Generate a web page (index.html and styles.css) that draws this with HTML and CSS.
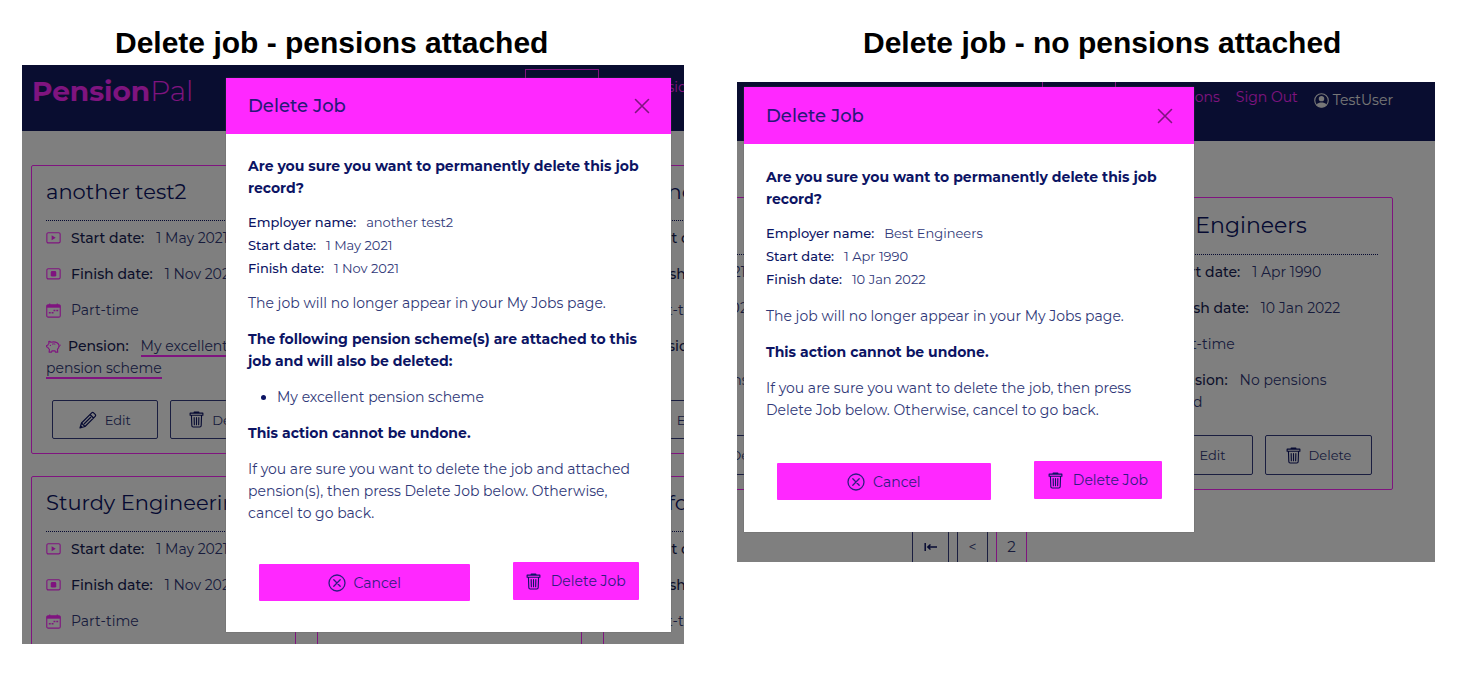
FILE: index.html
```html
<!DOCTYPE html>
<html lang="en">
<head>
<meta charset="utf-8">
<title>PensionPal - Delete job</title>
<link rel="stylesheet" href="styles.css">
</head>
<body>
<svg class="sprite" aria-hidden="true">
  <symbol id="i-play" viewBox="0 0 16 13"><rect x=".8" y=".8" width="14.4" height="11" rx="1.5" fill="none" stroke="currentColor" stroke-width="1.2"/><path d="M6 3.6v5.4l4.4-2.7z" fill="currentColor"/></symbol>
  <symbol id="i-stop" viewBox="0 0 16 13"><rect x=".8" y=".8" width="14.4" height="11" rx="1.5" fill="none" stroke="currentColor" stroke-width="1.2"/><rect x="5" y="3.3" width="6" height="6" rx="1.5" fill="currentColor"/></symbol>
  <symbol id="i-cal" viewBox="0 0 16 16"><path d="M4 .5V2M12 .5V2" stroke="currentColor" stroke-width="1.2"/><rect x=".8" y="1.8" width="14.4" height="13.2" rx="1.5" fill="none" stroke="currentColor" stroke-width="1.2"/><path d="M.8 2h14.4v3H.8z" fill="currentColor"/><path d="M8 8h2M11 8h2M3 10.5h2M6 10.5h2" stroke="currentColor" stroke-width="1.6"/></symbol>
  <symbol id="i-pig" viewBox="0 0 16 16"><path d="M13.800 6.500C13 4.200 10.800 3 8 3c-1 0-2 .2-2.800.5C4.600 2.800 3.700 2.500 2.900 2.600l.3 2c-.7.600-1.100 1.200-1.400 2-.9 0-1.300.3-1.300 1s.5 1.300 1.500 1.300c.3.9.9 1.600 1.700 2.200l-.4 2.900H6l.4-1.500c1 .2 2.200.2 3.200 0L10 14h2.500l-.3-3c1.300-1 1.800-2.300 1.600-4.500z" fill="none" stroke="currentColor" stroke-width="1.200" stroke-linejoin="round"/><path d="M13.800 8c1.200-.2 1.600-1 1.300-2M10 5.500c-1.200-.4-2.400-.4-3.600 0" fill="none" stroke="currentColor"/><circle cx="4.700" cy="6.800" r=".7" fill="currentColor"/></symbol>
  <symbol id="i-pencil" viewBox="0 0 18 18"><path d="M1 17l1.500-5L12.700 1.800c.6-.6 1.300-.6 1.900 0l1.600 1.600c.6.600.6 1.300 0 1.900L6 15.500zM2.500 12L6 15.500M11 3.500L14.500 7M12 6L5 13M1 17l2-.8-1.200-1.200z" fill="none" stroke="currentColor" stroke-width="1.2" stroke-linejoin="round"/></symbol>
  <symbol id="i-trash" viewBox="0 0 16 18"><path d="M5.500 2.200V1h5v1.200M1.200 2.200h13.600v2.200H1.200zM2.600 4.500l.4 11c0 1 .6 1.500 1.500 1.500h7c.9 0 1.500-.5 1.500-1.500l.4-11M5.500 7l.2 7.500M8 7v7.500M10.500 7l-.2 7.500" fill="none" stroke="currentColor" stroke-width="1.200" stroke-linejoin="round" stroke-linecap="round"/></symbol>
  <symbol id="i-cancel" viewBox="0 0 18 18"><circle cx="9" cy="9" r="8" fill="none" stroke="currentColor" stroke-width="1.300"/><path d="M5.800 5.800l6.400 6.400M12.200 5.800l-6.400 6.400" stroke="currentColor" stroke-width="1.300" stroke-linecap="round"/></symbol>
  <symbol id="i-close" viewBox="0 0 16 16"><path d="M1.500 1.500l13 13M14.500 1.500l-13 13" stroke="currentColor" stroke-width="1.600" stroke-linecap="round"/></symbol>
  <symbol id="i-user" viewBox="0 0 16 16"><circle cx="8" cy="8" r="7.200" fill="none" stroke="currentColor" stroke-width="1.200"/><circle cx="8" cy="6" r="2.900" fill="currentColor"/><path d="M2.600 12.500C4 10.300 6 10 8 10s4 .3 5.400 2.500C12 14.500 10 15.200 8 15.200s-4-.7-5.400-2.700z" fill="currentColor"/></symbol>
  <symbol id="i-first" viewBox="0 0 14 10"><path d="M1.200 1v8M3.500 5H13M6.500 2.500L3.800 5l2.700 2.500" fill="none" stroke="currentColor" stroke-width="1.500"/></symbol>
</svg>

<main class="board">
  <section class="panel">
    <h1 class="panel-title panel-title-a">Delete job - pensions attached</h1>
    <div class="screen screen-a">
      <div class="app">
        <header class="topbar">
          <a class="logo" href="#"><b>Pension</b>Pal</a>
          <nav class="nav"><a class="current" href="#" aria-label="My Jobs"></a><a href="#">My Pensions</a></nav>
        </header>
        <div class="cards">
          <article class="card">
            <h2>another test2</h2>
            <p><svg class="ico wide"><use href="#i-play"/></svg><b>Start date:</b>1 May 2021</p>
            <p><svg class="ico wide"><use href="#i-stop"/></svg><b>Finish date:</b>1 Nov 2021</p>
            <p><svg class="ico"><use href="#i-cal"/></svg>Part-time</p>
            <p><svg class="ico near"><use href="#i-pig"/></svg><b>Pension:</b><a href="#">My excellent pension scheme</a></p>
            <div class="actions"><button><svg class="pencil"><use href="#i-pencil"/></svg>Edit</button><button><svg class="trash"><use href="#i-trash"/></svg>Delete</button></div>
          </article>
          <article class="card"></article>
          <article class="card">
            <h2>Technology</h2>
            <p><svg class="ico wide"><use href="#i-play"/></svg><b>Start date:</b></p>
            <p><svg class="ico wide"><use href="#i-stop"/></svg><b>Finish date:</b></p>
            <p><svg class="ico"><use href="#i-cal"/></svg>Part-time</p>
            <p><svg class="ico near"><use href="#i-pig"/></svg><b>Pension:</b><br>&nbsp;</p>
            <div class="actions"><button><svg class="pencil"><use href="#i-pencil"/></svg>Edit</button><button aria-label="Delete"></button></div>
          </article>
          <article class="card">
            <h2>Sturdy Engineering</h2>
            <p><svg class="ico wide"><use href="#i-play"/></svg><b>Start date:</b>1 May 2021</p>
            <p><svg class="ico wide"><use href="#i-stop"/></svg><b>Finish date:</b>1 Nov 2021</p>
            <p><svg class="ico"><use href="#i-cal"/></svg>Part-time</p>
          </article>
          <article class="card"></article>
          <article class="card">
            <h2>Comfort</h2>
            <p><svg class="ico wide"><use href="#i-play"/></svg><b>Start date:</b></p>
            <p><svg class="ico wide"><use href="#i-stop"/></svg><b>Finish date:</b></p>
            <p><svg class="ico"><use href="#i-cal"/></svg>Part-time</p>
          </article>
        </div>
      </div>
      <div class="overlay">
        <div class="modal" role="dialog" aria-labelledby="t1">
          <header class="modal-head"><h2 id="t1">Delete Job</h2><button class="close" aria-label="Close"><svg><use href="#i-close"/></svg></button></header>
          <div class="modal-body">
            <p class="ask">Are you sure you want to permanently delete this job record?</p>
            <dl>
              <div><dt>Employer name:</dt><dd>another test2</dd></div>
              <div><dt>Start date:</dt><dd>1 May 2021</dd></div>
              <div><dt>Finish date:</dt><dd>1 Nov 2021</dd></div>
            </dl>
            <p>The job will no longer appear in your My Jobs page.</p>
            <p class="strong">The following pension scheme(s) are attached to this job and will also be deleted:</p>
            <ul><li>My excellent pension scheme</li></ul>
            <p class="strong">This action cannot be undone.</p>
            <p>If you are sure you want to delete the job and attached pension(s), then press Delete Job below. Otherwise, cancel to go back.</p>
          </div>
          <footer class="modal-foot"><button class="cancel"><svg><use href="#i-cancel"/></svg>Cancel</button><button class="delete"><svg class="trash"><use href="#i-trash"/></svg>Delete Job</button></footer>
        </div>
      </div>
    </div>
  </section>

  <section class="panel">
    <h1 class="panel-title panel-title-b">Delete job - no pensions attached</h1>
    <div class="screen screen-b">
      <div class="app">
        <header class="topbar">
          <nav class="nav"><a class="current" href="#" aria-label="My Jobs"></a><a href="#">My Pensions</a><a href="#">Sign Out</a><span class="user"><svg><use href="#i-user"/></svg>TestUser</span></nav>
        </header>
        <div class="cards">
          <article class="card">
            <h2>Acme</h2>
            <p><svg class="ico wide"><use href="#i-play"/></svg><b>Start date:</b>1 May 2021</p>
            <p><svg class="ico wide"><use href="#i-stop"/></svg><b>Finish date:</b>1 Nov 2021</p>
            <p><svg class="ico"><use href="#i-cal"/></svg>Part-time</p>
            <p><svg class="ico near"><use href="#i-pig"/></svg><b>Pension:</b>No pensions attached</p>
            <div class="actions"><button><svg class="pencil"><use href="#i-pencil"/></svg>Edit</button><button><svg class="trash"><use href="#i-trash"/></svg>Delete</button></div>
          </article>
          <article class="card"></article>
          <article class="card">
            <h2>Best Engineers</h2>
            <p><svg class="ico wide"><use href="#i-play"/></svg><b>Start date:</b>1 Apr 1990</p>
            <p><svg class="ico wide"><use href="#i-stop"/></svg><b>Finish date:</b>10 Jan 2022</p>
            <p><svg class="ico"><use href="#i-cal"/></svg>Part-time</p>
            <p><svg class="ico near"><use href="#i-pig"/></svg><b>Pension:</b>No pensions attached</p>
            <div class="actions"><button><svg class="pencil"><use href="#i-pencil"/></svg>Edit</button><button><svg class="trash"><use href="#i-trash"/></svg>Delete</button></div>
          </article>
        </div>
        <div class="pager"><button class="first" aria-label="First page"><svg><use href="#i-first"/></svg></button><button aria-label="Previous page">&lt;</button><button class="here">2</button></div>
      </div>
      <div class="overlay">
        <div class="modal" role="dialog" aria-labelledby="t2">
          <header class="modal-head"><h2 id="t2">Delete Job</h2><button class="close" aria-label="Close"><svg><use href="#i-close"/></svg></button></header>
          <div class="modal-body">
            <p class="ask">Are you sure you want to permanently delete this job record?</p>
            <dl>
              <div><dt>Employer name:</dt><dd>Best Engineers</dd></div>
              <div><dt>Start date:</dt><dd>1 Apr 1990</dd></div>
              <div><dt>Finish date:</dt><dd>10 Jan 2022</dd></div>
            </dl>
            <p>The job will no longer appear in your My Jobs page.</p>
            <p class="strong">This action cannot be undone.</p>
            <p>If you are sure you want to delete the job, then press Delete Job below. Otherwise, cancel to go back.</p>
          </div>
          <footer class="modal-foot"><button class="cancel"><svg><use href="#i-cancel"/></svg>Cancel</button><button class="delete"><svg class="trash"><use href="#i-trash"/></svg>Delete Job</button></footer>
        </div>
      </div>
    </div>
  </section>
</main>
</body>
</html>
```
FILE: styles.css
```css
:root {
  --navy: #0c1464;
  --ink: #303878;
  --line: #343c80;
  --pink: #ff28ff;
}
* { box-sizing: border-box; }
body {
  margin: 0;
  background: #fff;
  color: var(--ink);
  font: 400 14px/22px Montserrat, Inter, sans-serif;
}
h1, h2, p, dl, dd, ul { margin: 0; }
button { font: inherit; color: inherit; background: none; padding: 0; border: 0; }
svg { flex: none; }
.sprite { display: none; }

.board {
  display: grid;
  grid-template-columns: 662fr 698fr;
  gap: 53px;
  align-items: start;
  padding: 24px 23px 32px 22px;
}
.panel-title {
  color: #000;
  font: 700 30px/38px "Liberation Sans", Arial, sans-serif;
  white-space: nowrap;
}
.panel-title-a { padding-left: 93px; margin-bottom: 3px; }
.panel-title-b { padding-left: 126px; margin-bottom: 20px; }

.screen { position: relative; overflow: hidden; background: #fff; }
.app { position: absolute; inset: 0; overflow: hidden; }
.overlay { position: relative; background: rgba(0, 0, 0, .5); }
.screen-a .overlay { padding: 13px 13px 12px 204px; }
.screen-b .overlay { padding: 5px 241px 30px 7px; }

/* page behind the dialog */
.topbar { display: flex; align-items: flex-start; background: #121a60; color: var(--pink); }
.screen-a .topbar { height: 66px; padding-left: 10px; }
.screen-b .topbar { height: 59px; justify-content: flex-end; padding-right: 42px; }
.logo { flex: none; width: 493px; font-size: 28px; line-height: 52px; font-weight: 300; color: inherit; text-decoration: none; }
.logo b { font-weight: 700; }
.nav { display: flex; flex: none; align-items: center; gap: 16px; height: 36px; white-space: nowrap; }
.screen-a .nav { margin-top: 4px; }
.screen-b .nav { margin-top: -3px; }
.nav a { color: inherit; text-decoration: none; }
.nav .current { width: 74px; height: 36px; border: 1px solid var(--pink); }
.user { display: flex; align-items: center; gap: 4px; padding-top: 6px; color: #eee; }
.user svg { width: 15px; height: 15px; }

.cards { display: grid; gap: 22px 21px; }
.screen-a .cards { grid-template-columns: repeat(3, 265px); padding: 34px 9px 0; }
.screen-b .cards { grid-template-columns: repeat(3, 268px); justify-content: end; padding: 56px 42px 0; }
.card { border: 1px solid var(--pink); border-radius: 2px; padding: 12px 14px 14px; }
.card h2 {
  padding-bottom: 14px;
  margin-bottom: 6px;
  border-bottom: 1px dotted var(--navy);
  color: var(--navy);
  font-size: 21px;
  line-height: 28px;
  font-weight: 400;
  white-space: nowrap;
}
.card p { margin-bottom: 14px; }
.card p b { color: #181e54; font-weight: 500; margin-right: 12px; }
.card p a { color: inherit; text-decoration: none; border-bottom: 2px solid var(--pink); }
.ico { width: 15px; height: 15px; margin-right: 10px; color: var(--pink); vertical-align: -3px; }
.ico.wide { height: 12px; vertical-align: -1px; }
.ico.near { margin-right: 7px; }
.actions { display: grid; grid-template-columns: 1fr 1fr; gap: 12px; padding: 7px 6px 0; }
.actions button {
  display: flex;
  align-items: center;
  justify-content: center;
  gap: 8px;
  height: 39px;
  border: 1px solid var(--line);
  border-radius: 2px;
  font-size: 13px;
}
.screen-b .card { padding-top: 14px; }
.screen-b .card h2 { font-size: 22px; }
.screen-b .ico { margin-right: 12px; }
.screen-b .actions { padding-top: 8px; }
.screen-b .actions button { height: 40px; }
.pencil { width: 18px; height: 18px; color: var(--navy); }
.trash { width: 15px; height: 17px; color: var(--navy); }
.pager { display: flex; gap: 8px; padding: 38px 0 0 175px; }
.pager button { width: 31px; height: 38px; border: 1px solid var(--line); }
.pager .first { width: 37px; color: var(--navy); }
.pager .first svg { width: 14px; height: 10px; }
.pager .here { border-color: var(--pink); font-size: 15px; }

/* dialog */
.modal { background: #fff; box-shadow: 0 0 1px #555; }
.modal-head { display: flex; align-items: center; justify-content: space-between; height: 56px; padding: 0 21px 0 22px; background: var(--pink); }
.modal-head h2 { color: #281878; font-size: 18px; font-weight: 500; line-height: 24px; }
.close { display: flex; color: #801480; }
.close svg { width: 16px; height: 16px; }
.modal-body { padding: 21px 22px 0; }
.modal-body p, .modal-body ul { margin-bottom: 14px; }
.modal-body .ask, .strong { color: var(--navy); font-weight: 700; }
.modal-body .ask { margin-bottom: 12px; }
dl { margin-bottom: 12px; font-size: 13px; line-height: 23px; }
dl div { display: flex; gap: 10px; }
dt { color: var(--navy); font-weight: 500; }
ul { padding-left: 29px; }
li::marker { color: var(--navy); }
.modal-foot { display: flex; align-items: flex-start; gap: 43px; padding: 24px 32px 31px 33px; }
.modal-foot button {
  display: flex;
  align-items: center;
  justify-content: center;
  gap: 8px;
  border-radius: 1px;
  background: var(--pink);
  color: #301c80;
  white-space: nowrap;
}
.cancel { flex: 5 1 0; height: 37px; margin-top: 2px; }
.cancel svg { width: 18px; height: 18px; }
.modal-foot .delete { flex: 3 1 0; height: 38px; gap: 10px; }

.screen-b .modal-head { height: 57px; }
.screen-b .modal-body { padding-top: 22px; }
.screen-b dl { margin-bottom: 14px; }
.screen-b .modal-foot { padding: 26px 32px 32px 33px; }
```
